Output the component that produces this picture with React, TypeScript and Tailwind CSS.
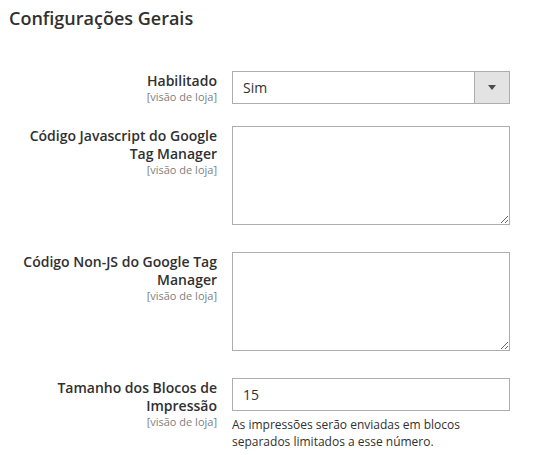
import React from 'react';

const Scope: React.FC = () => (
  <span className="block text-[11px] leading-[13px] text-[#808080]">[visão de loja]</span>
);

const Label: React.FC<{ text: string }> = ({ text }) => (
  <div className="w-[198px] ml-[19px] pt-[1px] text-right">
    <span className="block text-[14px] leading-[18px] font-semibold text-[#303030]">{text}</span>
    <Scope />
  </div>
);

const App: React.FC = () => {
  return (
    <div className="w-[543px] h-[455px] bg-white font-['Open_Sans',sans-serif] text-[#303030]">
      <h2 className="pl-[9px] pt-[7px] text-[18px] leading-[22px] font-semibold text-[#303030]">
        Configurações Gerais
      </h2>

      <div className="mt-[42px] flex flex-col">
        {/* Habilitado */}
        <div className="flex items-start">
          <Label text="Habilitado" />
          <div className="ml-[15px] w-[278px] h-[33px] flex border border-[#adadad] bg-white">
            <span className="flex-1 pl-[10px] text-[14px] leading-[31px]">Sim</span>
            <span className="w-[35px] flex items-center justify-center border-l border-[#adadad] bg-[#e3e3e3]">
              <svg width="8" height="5" viewBox="0 0 8 5">
                <path d="M0 0h8L4 5z" fill="#514943" />
              </svg>
            </span>
          </div>
        </div>

        {/* GTM JS */}
        <div className="mt-[22px] flex items-start">
          <Label text="Código Javascript do Google Tag Manager" />
          <textarea
            className="ml-[15px] w-[278px] h-[99px] border border-[#adadad] bg-white outline-none resize block"
            defaultValue=""
          />
        </div>

        {/* GTM Non-JS */}
        <div className="mt-[27px] flex items-start">
          <Label text="Código Non-JS do Google Tag Manager" />
          <textarea
            className="ml-[15px] w-[278px] h-[99px] border border-[#adadad] bg-white outline-none resize block"
            defaultValue=""
          />
        </div>

        {/* Tamanho */}
        <div className="mt-[27px] flex items-start">
          <Label text="Tamanho dos Blocos de Impressão" />
          <div className="ml-[15px] w-[278px]">
            <div className="h-[33px] border border-[#adadad] pl-[10px] text-[14px] leading-[31px]">15</div>
            <p className="mt-[5px] text-[12px] leading-[17px] text-[#303030]">
              As impressões serão enviadas em blocos separados limitados a esse número.
            </p>
          </div>
        </div>
      </div>
    </div>
  );
};

export default App;
